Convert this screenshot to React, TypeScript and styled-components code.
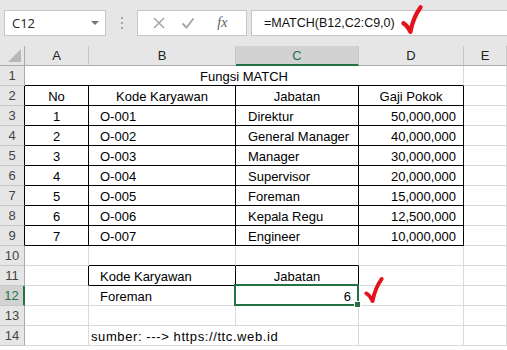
import React from 'react';
import styled, { createGlobalStyle } from 'styled-components';

const GlobalStyle = createGlobalStyle`
  html, body {
    margin: 0;
    padding: 0;
    background: #ffffff;
  }
  body {
    font-family: "Liberation Sans", Arial, sans-serif;
  }
`;

const GRID = '#d9d9d9';
const HEAD_LINE = '#ababab';
const HEAD_SEP = '#c8c8c8';
const GREEN = '#217346';

type Align = 'left' | 'center' | 'right';

interface CellSpec {
  text?: string;
  align?: Align;
  padLeft?: number;
  padRight?: number;
  span?: number;
  spacing?: number;
  selected?: boolean;
  tick?: boolean;
}

const employees = [
  ['1', 'O-001', 'Direktur', '50,000,000'],
  ['2', 'O-002', 'General Manager', '40,000,000'],
  ['3', 'O-003', 'Manager', '30,000,000'],
  ['4', 'O-004', 'Supervisor', '20,000,000'],
  ['5', 'O-005', 'Foreman', '15,000,000'],
  ['6', 'O-006', 'Kepala Regu', '12,500,000'],
  ['7', 'O-007', 'Engineer', '10,000,000'],
];

const rows: CellSpec[][] = [
  [{ text: 'Fungsi MATCH', align: 'center', span: 4 }, {}],
  [
    { text: 'No', align: 'center' },
    { text: 'Kode Karyawan', align: 'center' },
    { text: 'Jabatan', align: 'center' },
    { text: 'Gaji Pokok', align: 'center' },
    {},
  ],
  ...employees.map(([no, kode, jabatan, gaji]) => [
    { text: no, align: 'center' as Align },
    { text: kode, padLeft: 11 },
    { text: jabatan, padLeft: 12 },
    { text: gaji, align: 'right' as Align, padRight: 7 },
    {},
  ]),
  [{}, {}, {}, {}, {}],
  [{}, { text: 'Kode Karyawan', padLeft: 11 }, { text: 'Jabatan', align: 'center' }, {}, {}],
  [{}, { text: 'Foreman', padLeft: 11 }, { text: '6', align: 'right', padRight: 7, selected: true }, { tick: true }, {}],
  [{}, {}, {}, {}, {}],
  [{}, { text: 'sumber: ---> https://ttc.web.id', padLeft: 2, span: 2, spacing: 0.6 }, {}, {}],
];

// black outlined cells: sheet row (1-based), column (1 = A)
const isBoxed = (r: number, c: number) => {
  if (r >= 2 && r <= 9 && c >= 1 && c <= 4) return true;
  if (r === 11 && (c === 2 || c === 3)) return true;
  return false;
};

const Page = styled.div`
  position: relative;
  width: 507px;
  height: 350px;
  overflow: hidden;
  background: #ffffff;
`;

const FormulaBar = styled.div`
  display: flex;
  align-items: center;
  height: 46px;
  padding-left: 4px;
  background: #e6e6e6;
  box-sizing: border-box;
`;

const Box = styled.div<{ $width?: number }>`
  display: flex;
  align-items: center;
  height: 26px;
  box-sizing: border-box;
  background: #ffffff;
  border: 1px solid #c6c6c6;
  ${(p) => (p.$width ? `width: ${p.$width}px; flex: none;` : 'flex: 1;')}
`;

const NameBox = styled(Box)`
  justify-content: space-between;
  padding: 0 6px 0 7px;
  font-family: "Open Sans", "Liberation Sans", sans-serif;
  font-size: 13px;
  color: #222;
`;

const Caret = styled.span`
  width: 0;
  height: 0;
  border-left: 4px solid transparent;
  border-right: 4px solid transparent;
  border-top: 4px solid #777;
`;

const Grip = styled.div`
  display: flex;
  flex-direction: column;
  gap: 3px;
  width: 2px;
  margin: 0 14px 0 15px;

  i {
    display: block;
    width: 2px;
    height: 2px;
    background: #a8a8a8;
  }
`;

const FxButtons = styled(Box)`
  justify-content: space-around;
  padding: 0 4px 0 6px;
  margin-right: 4px;
`;

const FxIcon = styled.span`
  display: flex;
  width: 24px;
  justify-content: center;
  font-family: "Liberation Serif", serif;
  font-style: italic;
  font-size: 14px;
  color: #5f5f5f;
`;

const FormulaInput = styled(Box)`
  position: relative;
  padding-left: 12px;
  margin-right: -4px;
  font-size: 12.5px;
  color: #111;
`;

const Tick = styled.svg<{ $left: number; $top: number }>`
  position: absolute;
  left: ${(p) => p.$left}px;
  top: ${(p) => p.$top}px;
  overflow: visible;
  pointer-events: none;
  z-index: 3;
`;

const Sheet = styled.div`
  display: grid;
  grid-template-columns: 25px 64px 147px 123px 105px 1fr;
  grid-auto-rows: 20px;
  font-size: 13px;
  color: #000;
`;

const Corner = styled.div`
  position: relative;
  background: #e6e6e6;
  border-right: 1px solid ${HEAD_LINE};
  border-bottom: 1px solid ${HEAD_LINE};
  box-sizing: border-box;

  &::after {
    content: '';
    position: absolute;
    right: 3px;
    bottom: 3px;
    width: 0;
    height: 0;
    border-left: 13px solid transparent;
    border-bottom: 13px solid #b8b8b8;
  }
`;

const ColHead = styled.div<{ $active?: boolean }>`
  display: flex;
  align-items: center;
  justify-content: center;
  box-sizing: border-box;
  background: ${(p) => (p.$active ? '#d2d2d2' : '#e6e6e6')};
  border-right: 1px solid ${HEAD_SEP};
  border-bottom: ${(p) => (p.$active ? `2px solid ${GREEN}` : `1px solid ${HEAD_LINE}`)};
  color: ${(p) => (p.$active ? GREEN : '#222')};
  padding-top: ${(p) => (p.$active ? 1 : 0)}px;
`;

const RowHead = styled.div<{ $active?: boolean; $edge: string }>`
  display: flex;
  align-items: center;
  justify-content: center;
  box-sizing: border-box;
  background: ${(p) => (p.$active ? '#d2d2d2' : '#e6e6e6')};
  border-bottom: 1px solid ${HEAD_SEP};
  border-right: ${(p) => (p.$active ? `2px solid ${GREEN}` : `1px solid ${p.$edge}`)};
  color: ${(p) => (p.$active ? GREEN : '#444')};
`;

const Cell = styled.div<{
  $align: Align;
  $padLeft: number;
  $padRight: number;
  $right: string;
  $bottom: string;
  $span: number;
  $spacing: number;
}>`
  position: relative;
  grid-column: span ${(p) => p.$span};
  display: flex;
  align-items: flex-end;
  justify-content: ${(p) =>
    p.$align === 'center' ? 'center' : p.$align === 'right' ? 'flex-end' : 'flex-start'};
  box-sizing: border-box;
  padding: 0 ${(p) => p.$padRight}px 1px ${(p) => p.$padLeft}px;
  line-height: 15px;
  letter-spacing: ${(p) => p.$spacing}px;
  white-space: nowrap;
  border-right: 1px solid ${(p) => p.$right};
  border-bottom: 1px solid ${(p) => p.$bottom};
`;

const Selection = styled.div`
  position: absolute;
  top: -2px;
  left: -2px;
  right: -1px;
  bottom: -1px;
  border: 2px solid ${GREEN};
  pointer-events: none;
  z-index: 2;

  &::after {
    content: '';
    position: absolute;
    right: -4px;
    bottom: -4px;
    width: 5px;
    height: 5px;
    background: ${GREEN};
    border: 1px solid #ffffff;
  }
`;

const TickMark = ({ left, top, w, h }: { left: number; top: number; w: number; h: number }) => (
  <Tick $left={left} $top={top} width={w} height={h} viewBox="0 0 20 28">
    <path
      d="M2 17 C4 18 6 20 8.5 25 C10 17 13 9 18 2"
      fill="none"
      stroke="#e3121b"
      strokeWidth="4"
      strokeLinecap="round"
      strokeLinejoin="round"
    />
  </Tick>
);

export default function App() {
  return (
    <Page>
      <GlobalStyle />
      <FormulaBar>
        <NameBox $width={102}>
          <span>C12</span>
          <Caret />
        </NameBox>
        <Grip>
          <i />
          <i />
          <i />
        </Grip>
        <FxButtons $width={110}>
          <svg width="14" height="14" viewBox="0 0 14 14">
            <path d="M2 2 L12 12 M12 2 L2 12" stroke="#a8a8a8" strokeWidth="1.6" />
          </svg>
          <svg width="14" height="14" viewBox="0 0 14 14">
            <path d="M1.5 7.5 L5.5 11.5 L12.5 2.5" fill="none" stroke="#a8a8a8" strokeWidth="2" />
          </svg>
          <FxIcon>fx</FxIcon>
        </FxButtons>
        <FormulaInput>
          =MATCH(B12,C2:C9,0)
          <TickMark left={149} top={-6} w={22} h={30} />
        </FormulaInput>
      </FormulaBar>

      <Sheet>
        <Corner />
        {['A', 'B', 'C', 'D', 'E'].map((col) => (
          <ColHead key={col} $active={col === 'C'}>
            {col}
          </ColHead>
        ))}

        {rows.map((cells, ri) => {
          const r = ri + 1;
          const out: React.ReactNode[] = [
            <RowHead key={`h${r}`} $active={r === 12} $edge={isBoxed(r, 1) ? '#000' : HEAD_LINE}>
              {r}
            </RowHead>,
          ];
          let c = 1;
          cells.forEach((cell, i) => {
            const span = cell.span ?? 1;
            const last = c + span - 1;
            const right = isBoxed(r, last) || isBoxed(r, last + 1) ? '#000' : GRID;
            let bottomBlack = false;
            for (let k = c; k <= last; k++) {
              if (isBoxed(r, k) || isBoxed(r + 1, k)) bottomBlack = true;
            }
            out.push(
              <Cell
                key={`${r}-${i}`}
                $align={cell.align ?? 'left'}
                $padLeft={cell.padLeft ?? 2}
                $padRight={cell.padRight ?? 2}
                $right={right}
                $bottom={bottomBlack ? '#000' : GRID}
                $span={span}
                $spacing={cell.spacing ?? 0}
              >
                {cell.text}
                {cell.selected && <Selection />}
                {cell.tick && <TickMark left={5} top={-9} w={20} h={27} />}
              </Cell>
            );
            c += span;
          });
          return out;
        })}
      </Sheet>
    </Page>
  );
}
